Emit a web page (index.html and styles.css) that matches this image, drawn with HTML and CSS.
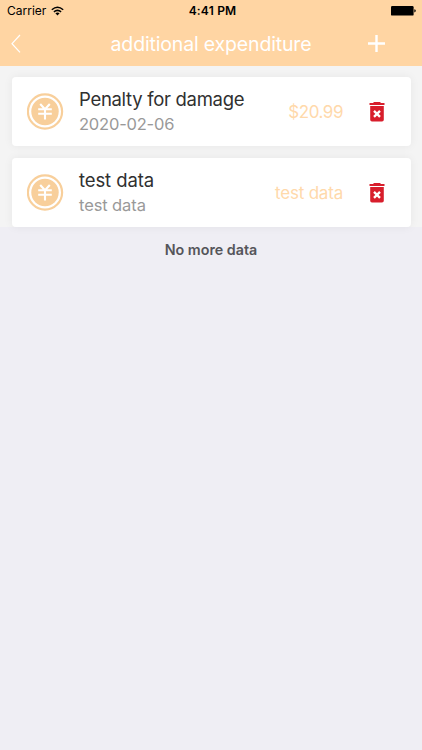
FILE: index.html
```html
<!DOCTYPE html>
<html lang="en">
<head>
<meta charset="utf-8">
<title>additional expenditure</title>
<link rel="stylesheet" href="styles.css">
</head>
<body>
<svg class="defs" width="0" height="0">
  <symbol id="coin" viewBox="0 0 37 37">
    <circle cx="18" cy="18.5" r="17.1" fill="none" stroke="#f8cf9b" stroke-width="2.2"/>
    <circle cx="18" cy="18.5" r="13.7" fill="#f8cf9b"/>
    <path d="M13.2 11L18 16.2L22.8 11M11.2 16.3H24.8M11.2 20.8H24.8M18 16V26.5" fill="none" stroke="#fff" stroke-width="2.1"/>
  </symbol>
  <symbol id="trash" viewBox="0 0 16 20">
    <path d="M5 0H11L12 .9H15.5V3H.5V.9H4ZM1.2 4H14.8V17.8Q14.8 19.6 13 19.6H3Q1.2 19.6 1.2 17.8Z" fill="#d81e2c"/>
    <path d="M5 8.9L11 14.9M11 8.9L5 14.9" stroke="#fff" stroke-width="2.3"/>
  </symbol>
</svg>
<header class="header">
  <div class="status">
    <div class="carrier"><span>Carrier</span>
      <svg width="13" height="10" viewBox="0 0 13 10"><path d="M.8 3.7Q6.5-1.3 12.2 3.7M2.9 5.9Q6.5 2.8 10.1 5.9" fill="none" stroke="#000" stroke-width="1.5"/><path d="M4.4 7.3Q6.5 5.6 8.6 7.3L6.5 9.5Z"/></svg>
    </div>
    <span class="time">4:41 PM</span>
    <svg class="battery" width="25" height="10" viewBox="0 0 25 10"><rect width="22.6" height="9.6" rx="1.2"/><path d="M23.3 3.2Q24.8 3.4 24.8 4.8T23.3 6.4Z"/></svg>
  </div>
  <nav class="nav">
    <svg class="back" width="10" height="20" viewBox="0 0 10 20"><path d="M9 1L1 9.7L9 18.4" fill="none" stroke="#fff" stroke-width="1.2"/></svg>
    <h1 class="title">additional expenditure</h1>
    <svg class="add" width="17" height="17" viewBox="0 0 17 17"><path d="M8.5 0V17M0 8.5H17" stroke="#fff" stroke-width="2.4"/></svg>
  </nav>
</header>
<main class="list">
  <article class="card">
    <svg class="coin"><use href="#coin"/></svg>
    <div class="info"><div class="name penalty">Penalty for damage</div><div class="date numeric">2020-02-06</div></div>
    <div class="amount price">$20.99</div>
    <svg class="trash"><use href="#trash"/></svg>
  </article>
  <article class="card">
    <svg class="coin"><use href="#coin"/></svg>
    <div class="info"><div class="name">test data</div><div class="date">test data</div></div>
    <div class="amount">test data</div>
    <svg class="trash"><use href="#trash"/></svg>
  </article>
</main>
<footer class="end">No more data</footer>
</body>
</html>
```
FILE: styles.css
```css
* { box-sizing: border-box; }
body { margin: 0; min-height: 750px; background: #efeef4; font-family: Inter, "Liberation Sans", sans-serif; }
svg { display: block; flex: none; }
.defs { position: absolute; }
.header { height: 65.6px; background: #ffd5a3; }
.status { height: 22px; display: grid; grid-template-columns: 1fr auto 1fr; align-items: center; padding: 0 6px 0 7px; font-size: 12px; line-height: 22px; }
.carrier { display: flex; align-items: center; gap: 5px; }
.time { font-weight: 600; letter-spacing: .2px; padding-left: 2px; }
.battery { justify-self: end; }
.nav { height: 43px; display: grid; grid-template-columns: 99px 1fr 99px; align-items: center; padding: 0 11px; }
.title { margin: 0; text-align: center; white-space: nowrap; color: #fff; font-size: 19.5px; line-height: 24px; font-weight: 400; letter-spacing: -.16px; }
.add { margin-left: 56px; }
.list { background: #f4f4f4; padding: 11.4px 11.5px 0; display: grid; gap: 11.6px; }
.card { height: 69.2px; display: flex; align-items: center; padding: 0 26px 0 15px; background: #fff; border-radius: 4px; box-shadow: 0 0 10px rgba(0, 0, 0, .06); white-space: nowrap; }
.coin { width: 37px; height: 37px; }
.info { margin-left: 15.5px; flex: 1; }
.name { color: #303030; font-size: 18.5px; line-height: 25px; letter-spacing: -.1px; }
.penalty { letter-spacing: -.3px; }
.date { color: #999; font-size: 16.5px; line-height: 24px; letter-spacing: -.1px; }
.numeric { letter-spacing: -.2px; }
.amount { color: #ffd9ab; font-size: 17px; line-height: 24px; font-weight: 400; letter-spacing: -.2px; padding-top: 1px; }
.price { letter-spacing: -.45px; }
.trash { width: 16px; height: 20px; margin: 1px 0 0 25.5px; }
.end { margin-top: 12px; text-align: center; color: #55555a; font-size: 14.3px; line-height: 22px; font-weight: 600; }
```
